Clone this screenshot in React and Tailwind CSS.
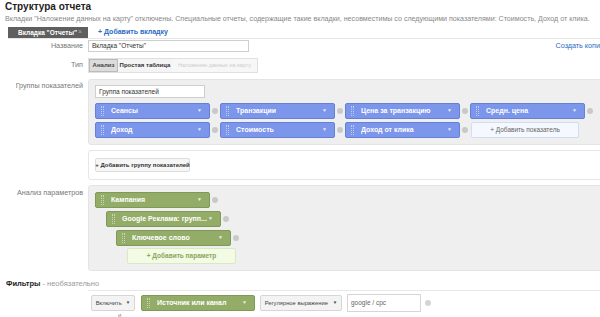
const font = { fontFamily: '"Liberation Sans", Arial, sans-serif' };

function Grip() {
  return <span className="mx-[5px] h-[10px] w-[3px] shrink-0 border-x border-dotted border-white/50" />;
}

function Remove() {
  return <span className="mx-[2px] h-[6px] w-[6px] shrink-0 rounded-full bg-[#c9c9c9]" />;
}

function Chip({ label, color, w = "w-[115px]" }) {
  const c =
    color === "green"
      ? "bg-[#93ad69] border-[#7f9a56]"
      : "bg-[#7b96ea] border-[#6680d6]";
  return (
    <div className={"flex h-[16px] shrink-0 items-center rounded-[2px] border text-[7px] font-bold text-white " + c + " " + w}>
      <Grip />
      <span className="ml-[2px] min-w-0 flex-1 truncate">{label}</span>
      <span className="mr-[7px] text-[5px] text-white/80">▼</span>
    </div>
  );
}

function Row({ label, children, className = "", labelClass = "" }) {
  return (
    <div className={"flex " + className}>
      <div className={"w-[84px] shrink-0 pr-[1px] text-right text-[7.2px] text-[#777] " + labelClass}>{label}</div>
      <div className="ml-[4px] min-w-0 flex-1">{children}</div>
    </div>
  );
}

export default function App() {
  const metrics = [
    ["Сеансы", "Транзакции", "Цена за транзакцию", "Средн. цена"],
    ["Доход", "Стоимость", "Доход от клика"],
  ];
  return (
    <div className="h-[317px] w-[600px] overflow-hidden whitespace-nowrap bg-white text-[#333]" style={font}>
      <div className="px-[5px]">
        <div className="text-[10px] font-bold leading-[13px] text-[#222]">Структура отчета</div>
        <div className="mt-[1px] text-[7.1px] leading-[10px] text-[#888]">
          Вкладки "Наложение данных на карту" отключены. Специальные отчеты, содержащие такие вкладки, несовместимы со следующими показателями: Стоимость, Доход от клика.
        </div>
      </div>
      <div className="ml-[8px] mt-[3px] flex items-end border-b border-[#e6e6e6]">
        <div className="flex h-[11px] w-[80px] items-center justify-between bg-[#5f5f5f] pl-[10px] pr-[6px] text-[6.5px] font-bold text-white">
          <span>Вкладка "Отчеты"</span>
          <span className="text-[7px] font-normal text-[#aaa]">×</span>
        </div>
        <div className="ml-[10px] pb-[1px] text-[7px] font-bold leading-[10px] text-[#2a6bbf]">+ Добавить вкладку</div>
      </div>

      <Row label="Название" className="mt-[1px] items-center">
        <div className="flex items-center justify-between">
          <div className="flex h-[12px] w-[161px] items-center border border-[#cfcfcf] pl-[3px] text-[6.5px] text-[#333]">Вкладка "Отчеты"</div>
          <div className="text-[7.2px] text-[#2a6bbf]">Создать копи</div>
        </div>
      </Row>

      <Row label="Тип" className="mt-[6px] items-center">
        <div className="flex h-[15px] w-[170px] items-stretch border border-[#e0e0e0] text-[6px]">
          <div className="flex w-[29px] items-center justify-center border border-[#bbb] bg-[#dcdcdc] font-bold text-[#444]">Анализ</div>
          <div className="flex w-[54px] items-center justify-center bg-[#f4f4f4] font-bold text-[#333]">Простая таблица</div>
          <div className="flex flex-1 items-center justify-center overflow-hidden bg-[#f7f7f7] text-[5.5px] text-[#ccc]">Наложение данных на карту</div>
        </div>
      </Row>

      <Row label="Группы показателей" className="mt-[6px] items-start" labelClass="pt-[2px]">
        <div className="-mr-[4px] rounded-l-[3px] border border-[#e4e4e4] bg-[#efefef] pb-[6px] pl-[6px] pt-[5px]">
          <div className="flex h-[13px] w-[110px] items-center border border-[#cfcfcf] bg-white pl-[3px] text-[6.5px] text-[#333]">Группа показателей</div>
          {metrics.map((row, i) => (
            <div key={i} className={(i === 0 ? "mt-[5px]" : "mt-[3px]") + " flex items-center"}>
              {row.map((m, j) => (
                <div key={j} className="flex items-center">
                  <Chip label={m} />
                  <Remove />
                </div>
              ))}
              {i === 1 && (
                <div className="ml-[1px] flex h-[16px] w-[108px] items-center justify-center rounded-[2px] border border-[#d3dcf2] bg-[#f5f8fe] text-[6.5px] text-[#666]">
                  + Добавить показатель
                </div>
              )}
            </div>
          ))}
        </div>
        <div className="-mr-[4px] mt-[5px] rounded-l-[3px] border border-[#e6e6e6] bg-white py-[7px] pl-[6px]">
          <div className="flex h-[14px] w-[95px] items-center justify-center rounded-[2px] border border-[#ddd] bg-[#f6f6f6] text-[6px] font-bold text-[#333]">
            + Добавить группу показателей
          </div>
        </div>
      </Row>

      <Row label="Анализ параметров" className="mt-[5px] items-start" labelClass="pt-[3px]">
        <div className="-mr-[4px] h-[86px] rounded-l-[3px] border border-[#e4e4e4] bg-[#efefef] pl-[6px] pt-[6px]">
          <div className="flex items-center">
            <Chip label="Кампания" color="green" />
            <Remove />
          </div>
          <div className="ml-[11px] mt-[3px] flex items-center">
            <Chip label="Google Реклама: групп..." color="green" />
            <Remove />
          </div>
          <div className="ml-[21px] mt-[3px] flex items-center">
            <Chip label="Ключевое слово" color="green" />
            <Remove />
          </div>
          <div className="ml-[32px] mt-[2px] flex h-[16px] w-[109px] items-center justify-center rounded-[2px] border border-[#dbe8c4] bg-[#f3fbe4] text-[6.5px] font-bold text-[#8aa65f]">
            + Добавить параметр
          </div>
        </div>
      </Row>

      <div className="ml-[6px] mt-[8px] text-[7.5px] leading-[10px]">
        <span className="font-bold text-[#222]">Фильтры</span>
        <span className="text-[#999]"> - необязательно</span>
      </div>
      <div className="ml-[88px] mt-[1px] border-t border-[#e8e8e8] pl-[3px] pt-[3px]">
        <div className="flex items-center">
          <div className="flex h-[16px] w-[44px] items-center justify-center gap-[4px] rounded-[2px] border border-[#d6d6d6] bg-[#f3f3f3] text-[5.8px] text-[#444]">
            <span>Включить</span>
            <span className="text-[4.5px]">▼</span>
          </div>
          <div className="ml-[6px]">
            <Chip label="Источник или канал" color="green" w="w-[114px]" />
          </div>
          <div className="ml-[5px] flex h-[16px] w-[82px] items-center justify-center gap-[5px] rounded-[2px] border border-[#d6d6d6] bg-[#f3f3f3] text-[5.8px] text-[#444]">
            <span>Регулярное выражение</span>
            <span className="text-[4.5px]">▼</span>
          </div>
          <div className="ml-[5px] flex h-[18px] w-[74px] items-start border border-[#d6d6d6] pl-[3px] pt-[3px] text-[6.5px] text-[#666]">
            google / cpc
          </div>
          <span className="ml-[4px] h-[6px] w-[6px] rounded-full bg-[#d4d4d4]" />
        </div>
        <div className="ml-[27px] text-[6px] leading-[7px] text-[#888]">и</div>
      </div>
    </div>
  );
}
